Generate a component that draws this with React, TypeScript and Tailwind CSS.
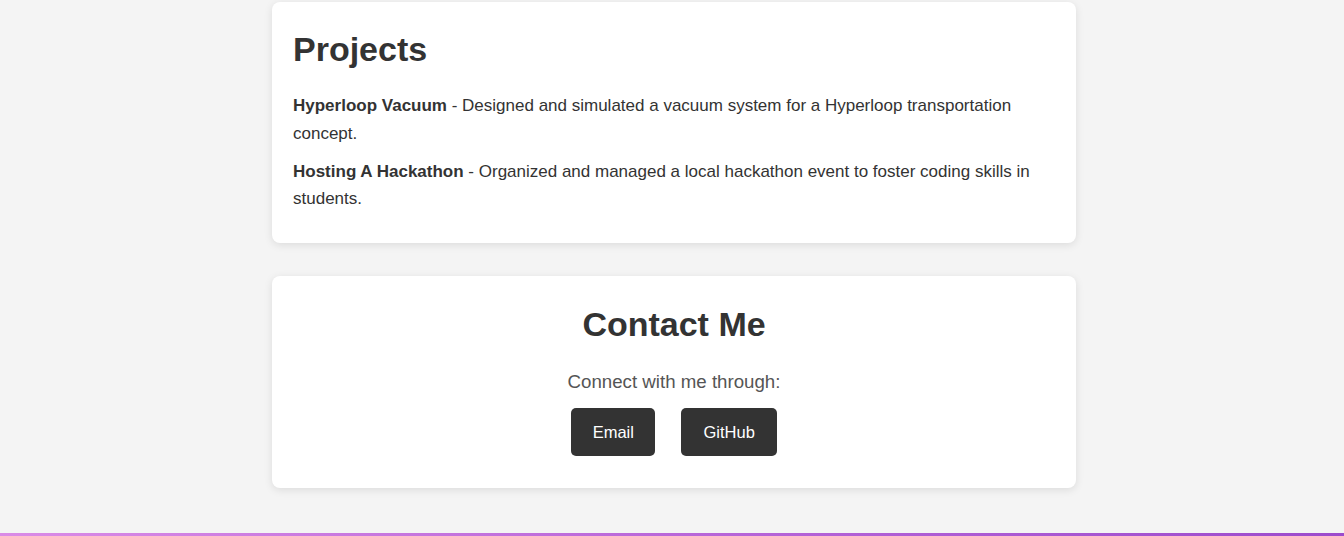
export default function App() {
  const projects = [
    {
      name: 'Hyperloop Vacuum',
      text: 'Designed and simulated a vacuum system for a Hyperloop transportation concept.',
    },
    {
      name: 'Hosting A Hackathon',
      text: 'Organized and managed a local hackathon event to foster coding skills in students.',
    },
  ];

  return (
    <div className="min-h-[536px] bg-[#f4f4f4] font-['Liberation_Sans',Arial,sans-serif] text-[#333] overflow-hidden">
      <div className="flex flex-col items-center pl-[4px] pt-[2px]">
        {/* Projects */}
        <section className="w-[804px] bg-white rounded-[8px] shadow-[0_2px_8px_rgba(0,0,0,0.1)] px-[21px] pt-5 pb-5">
          <h2 className="text-[34px] leading-[39px] font-bold mt-[8px] mb-[23px]">Projects</h2>
          {projects.map((p) => (
            <p key={p.name} className="text-[17px] leading-[27.5px] mb-[10.5px]">
              <strong>{p.name}</strong> - {p.text}
            </p>
          ))}
        </section>

        {/* Contact */}
        <section className="w-[804px] mt-[33px] bg-white rounded-[8px] shadow-[0_2px_8px_rgba(0,0,0,0.1)] px-5 pt-5 pb-[32px] flex flex-col items-center">
          <h2 className="text-[34px] leading-[39px] font-bold mt-[9px]">Contact Me</h2>
          <p className="text-[18.7px] leading-[29px] text-[#555] mt-[23px]">Connect with me through:</p>
          <div className="flex gap-[26px] mt-[12px]">
            <a className="h-[48px] px-[21.5px] flex items-center bg-[#333] text-white text-[16.5px] rounded-[5px]">Email</a>
            <a className="h-[48px] px-[22px] flex items-center bg-[#333] text-white text-[16.5px] rounded-[5px]">GitHub</a>
          </div>
        </section>
      </div>
      <div className="mt-[45px] h-[3px] bg-gradient-to-r from-[#da8be6] via-[#b967d9] to-[#9c4bcc]" />
    </div>
  );
}
